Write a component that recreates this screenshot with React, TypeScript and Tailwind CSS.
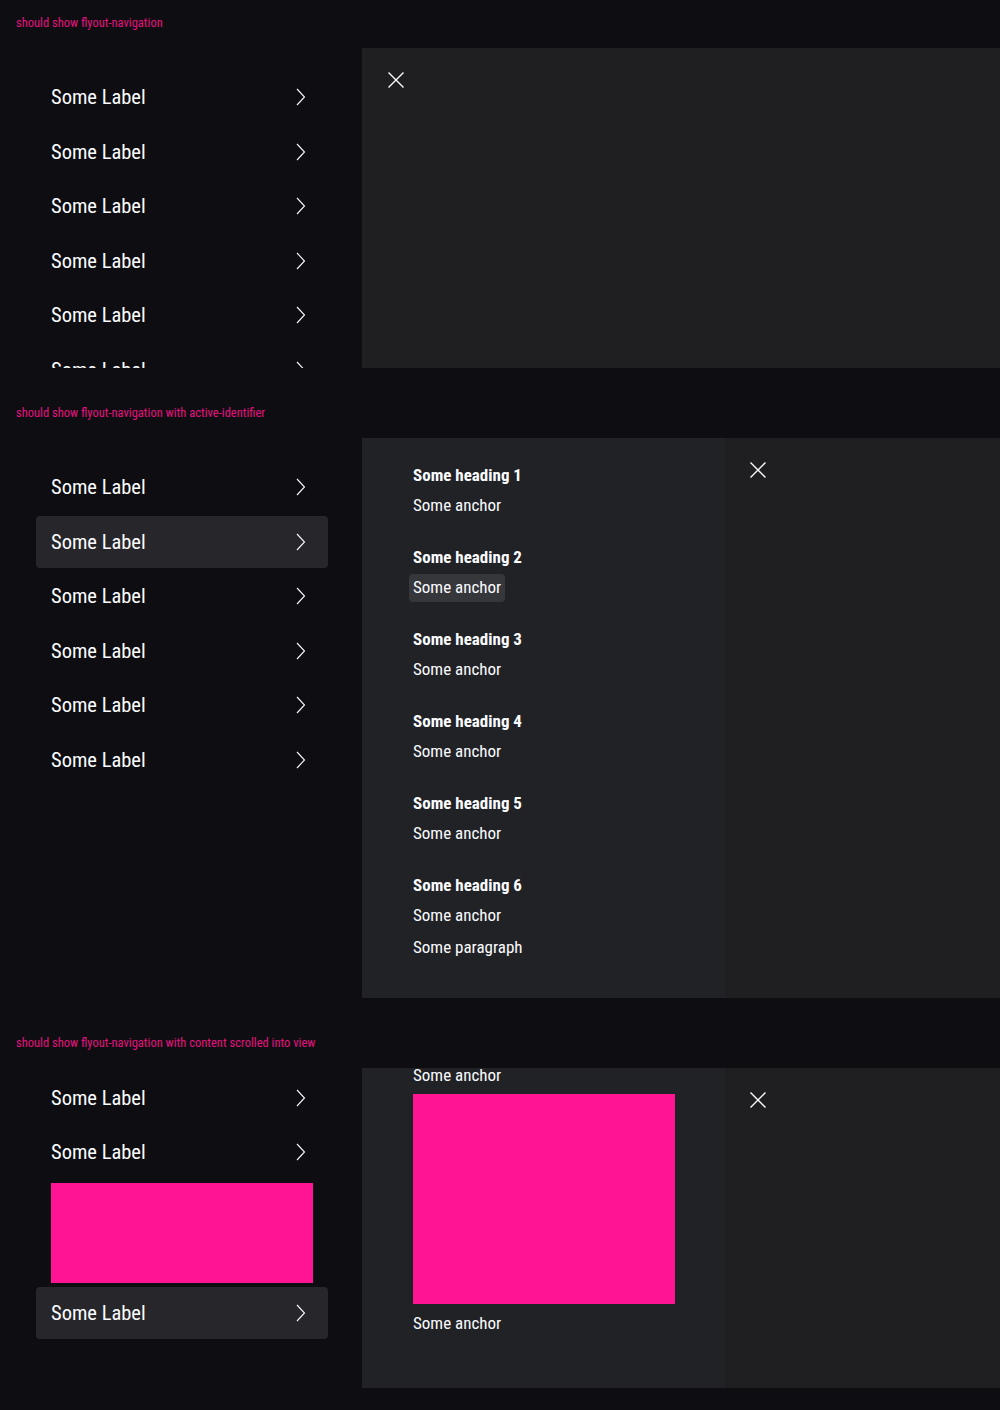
const FONT = "font-['Roboto_Condensed','Roboto',sans-serif]";

function Chevron() {
  return (
    <svg width="24" height="24" viewBox="0 0 24 24" fill="none" className="shrink-0">
      <path d="M8 4 L15.5 12 L8 20" stroke="#fbfcff" strokeWidth="1.1" />
    </svg>
  );
}

function CloseIcon() {
  return (
    <svg width="16" height="16" viewBox="0 0 16 16" fill="none" className="ml-[25px] mt-[24px]">
      <path d="M0.5 0.5 L15.5 15.5 M15.5 0.5 L0.5 15.5" stroke="#fbfcff" strokeWidth="1.4" />
    </svg>
  );
}

function NavItem({ active = false }: { active?: boolean }) {
  return (
    <div
      className={`flex h-[52.5px] shrink-0 items-center justify-between rounded-[4px] pl-[15px] pr-[15px] ${
        active ? "bg-[#26262b]" : ""
      }`}
    >
      <span className="text-[20.5px] leading-none text-[#fbfcff]">Some Label</span>
      <Chevron />
    </div>
  );
}

function Anchor({ active = false, label = "Some anchor" }: { active?: boolean; label?: string }) {
  return (
    <div
      className={`-mx-1 flex h-[28px] w-fit shrink-0 items-center rounded-[4px] px-1 text-[17px] text-[#fbfcff] ${
        active ? "bg-[#36373b]" : ""
      }`}
    >
      {label}
    </div>
  );
}

function Group({ n, activeAnchor = false, paragraph = false }: { n: number; activeAnchor?: boolean; paragraph?: boolean }) {
  return (
    <div className="flex flex-col gap-1">
      <div className="h-[26px] text-[17px] font-bold leading-[26px] text-[#fbfcff]">Some heading {n}</div>
      <Anchor active={activeAnchor} />
      {paragraph && <Anchor label="Some paragraph" />}
    </div>
  );
}

function Label({ children }: { children: string }) {
  return <p className="h-[14px] pl-4 text-[12.5px] leading-[14px] text-[#e6127f]">{children}</p>;
}

export default function App() {
  return (
    <div className={`${FONT} flex min-h-[1410px] flex-col gap-[18px] bg-[#0e0e12] pt-4`}>
      {/* default */}
      <Label>should show flyout-navigation</Label>
      <div className="flex h-[320px] overflow-hidden">
        <nav className="flex w-[362px] shrink-0 flex-col gap-[2px] pl-9 pr-[34px] pt-[23px]">
          {[0, 1, 2, 3, 4, 5].map((i) => (
            <NavItem key={i} />
          ))}
        </nav>
        <div className="flex-1 bg-[#1f1f21] pl-px">
          <CloseIcon />
        </div>
      </div>

      {/* active identifier */}
      <div className="mt-5">
        <Label>should show flyout-navigation with active-identifier</Label>
      </div>
      <div className="flex h-[560px] overflow-hidden">
        <nav className="flex w-[362px] shrink-0 flex-col gap-[2px] pl-9 pr-[34px] pt-[23px]">
          {[0, 1, 2, 3, 4, 5].map((i) => (
            <NavItem key={i} active={i === 1} />
          ))}
        </nav>
        <div className="flex w-[363px] shrink-0 flex-col gap-6 bg-[#212226] pl-[51px] pt-6">
          <Group n={1} />
          <Group n={2} activeAnchor />
          <Group n={3} />
          <Group n={4} />
          <Group n={5} />
          <Group n={6} paragraph />
        </div>
        <div className="flex-1 bg-[#1f1f21]">
          <CloseIcon />
        </div>
      </div>

      {/* scrolled into view */}
      <div className="mt-5">
        <Label>should show flyout-navigation with content scrolled into view</Label>
      </div>
      <div className="flex h-[320px] overflow-hidden">
        <nav className="flex w-[362px] shrink-0 flex-col pl-9 pr-[34px] pt-[3.5px]">
          <NavItem />
          <div className="mt-[2px]">
            <NavItem />
          </div>
          <div className="ml-[15px] mt-1 h-[100px] w-[262px] shrink-0 bg-[#ff1493]" />
          <div className="mt-1">
            <NavItem active />
          </div>
        </nav>
        <div className="flex w-[363px] shrink-0 flex-col bg-[#212226] pl-[51px]">
          <div className="-mt-[6px]">
            <Anchor />
          </div>
          <div className="mt-[4px] h-[210px] w-[262px] shrink-0 bg-[#ff1493]" />
          <div className="mt-[6px]">
            <Anchor />
          </div>
        </div>
        <div className="flex-1 bg-[#1f1f21]">
          <CloseIcon />
        </div>
      </div>
    </div>
  );
}
